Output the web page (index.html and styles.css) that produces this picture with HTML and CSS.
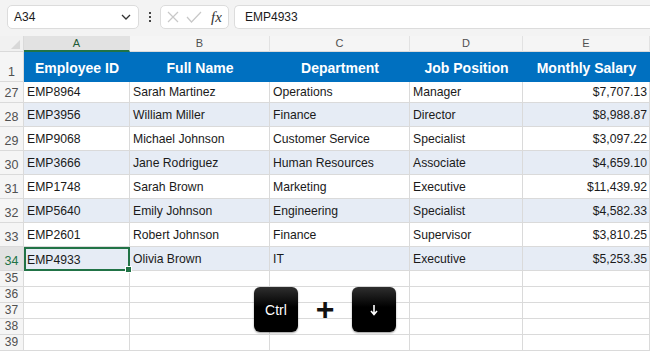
FILE: index.html
```html
<!DOCTYPE html>
<html lang="en">
<head>
  <meta charset="UTF-8">
  <title>Employees - Ctrl + Down</title>
  <link rel="stylesheet" href="styles.css">
</head>
<body>

  <div class="toolbar">
    <div class="namebox">
      <span>A34</span>
      <svg class="chev" width="10" height="6" viewBox="0 0 10 6"><path d="M1 1l4 4 4-4" fill="none" stroke="#333" stroke-width="1.3"/></svg>
    </div>
    <div class="dots"><i></i><i></i><i></i></div>
    <div class="fxbox">
      <svg width="14" height="14" viewBox="0 0 14 14"><path d="M2 2l10 10M12 2L2 12" stroke="#c8c8c8" stroke-width="1.2"/></svg>
      <svg width="16" height="14" viewBox="0 0 16 14"><path d="M1 7l4.5 5L15 2" fill="none" stroke="#c8c8c8" stroke-width="1.2"/></svg>
      <span class="fx">fx</span>
    </div>
    <div class="formula">EMP4933</div>
  </div>

  <div class="sheet">
    <div class="corner"></div>
    <div class="colhead sel">A</div>
    <div class="colhead">B</div>
    <div class="colhead">C</div>
    <div class="colhead">D</div>
    <div class="colhead">E</div>

    <div class="rowhead r-title">1</div>
    <div class="title">Employee ID</div>
    <div class="title">Full Name</div>
    <div class="title">Department</div>
    <div class="title">Job Position</div>
    <div class="title">Monthly Salary</div>
  </div>

  <div class="sheet" id="rows"></div>

  <div class="keys">
    <div class="key">Ctrl</div>
    <span class="plus">+</span>
    <div class="key">
      <svg width="10" height="12" viewBox="0 0 10 12"><path d="M5 1v9M2 7l3 3.5L8 7" fill="none" stroke="#fff" stroke-width="1.6"/></svg>
    </div>
  </div>

  <script>
    const dados = [
      [27, 'EMP8964', 'Sarah Martinez', 'Operations', 'Manager', '$7,707.13'],
      [28, 'EMP3956', 'William Miller', 'Finance', 'Director', '$8,988.87'],
      [29, 'EMP9068', 'Michael Johnson', 'Customer Service', 'Specialist', '$3,097.22'],
      [30, 'EMP3666', 'Jane Rodriguez', 'Human Resources', 'Associate', '$4,659.10'],
      [31, 'EMP1748', 'Sarah Brown', 'Marketing', 'Executive', '$11,439.92'],
      [32, 'EMP5640', 'Emily Johnson', 'Engineering', 'Specialist', '$4,582.33'],
      [33, 'EMP2601', 'Robert Johnson', 'Finance', 'Supervisor', '$3,810.25'],
      [34, 'EMP4933', 'Olivia Brown', 'IT', 'Executive', '$5,253.35']
    ];

    const rows = document.getElementById('rows');
    let html = '';

    dados.forEach(linha => {
      const n = linha[0];
      const faixa = n % 2 === 0 ? ' band' : '';
      const curto = n === 27 ? ' short' : '';
      const ativo = n === 34 ? ' active' : '';
      html += `<div class="rowhead${curto}${ativo}">${n}</div>`;
      for (let i = 1; i <= 5; i++) {
        let cls = 'cell' + faixa + curto;
        if (i === 5) cls += ' num';
        if (n === 34 && i === 1) cls += ' selected';
        html += `<div class="${cls}">${linha[i]}</div>`;
      }
    });

    for (let n = 35; n <= 39; n++) {
      html += `<div class="rowhead small">${n}</div>`;
      for (let i = 1; i <= 5; i++) html += '<div class="cell small"></div>';
    }

    rows.innerHTML = html;
  </script>

</body>
</html>
```

FILE: styles.css
```css
body {
  margin: 0;
  width: 650px;
  height: 352px;
  overflow: hidden;
  background: #fff;
  font-family: "Liberation Sans", Arial, sans-serif;
  color: #1a1a1a;
  position: relative;
}

.toolbar {
  height: 36px;
  background: #f3f3f3;
  display: flex;
  align-items: flex-start;
  padding: 5px 0 0 7px;
  box-sizing: border-box;
}

.namebox {
  width: 132px;
  height: 24px;
  box-sizing: border-box;
  background: #fff;
  border: 1px solid #dcdcdc;
  border-radius: 5px;
  display: flex;
  align-items: center;
  justify-content: space-between;
  padding: 0 7px 0 6px;
  font-size: 12px;
}

.dots {
  width: 21px;
  display: flex;
  flex-direction: column;
  align-items: center;
  justify-content: center;
  gap: 2px;
  height: 24px;
}

.dots i {
  width: 2px;
  height: 2px;
  background: #444;
  display: block;
}

.fxbox {
  width: 69px;
  height: 24px;
  box-sizing: border-box;
  background: #fff;
  border: 1px solid #dcdcdc;
  border-radius: 5px;
  display: flex;
  align-items: center;
  gap: 6px;
  padding: 0 0 0 5px;
}

.fx {
  font-family: "Liberation Serif", serif;
  font-style: italic;
  font-size: 15px;
  color: #333;
  margin-left: 3px;
}

.formula {
  margin-left: 5px;
  flex: 1;
  height: 24px;
  box-sizing: border-box;
  background: #fff;
  border: 1px solid #dcdcdc;
  border-right: none;
  border-radius: 5px 0 0 5px;
  font-size: 12px;
  line-height: 22px;
  padding-left: 10px;
}

.sheet {
  display: grid;
  grid-template-columns: 24px 106px 140px 140px 113px 127px;
}

.corner,
.colhead,
.rowhead {
  background: #f5f5f5;
  box-sizing: border-box;
  border-right: 1px solid #dadada;
  border-bottom: 1px solid #dadada;
  color: #505050;
  font-size: 11px;
}

.corner {
  height: 16px;
  position: relative;
  background: #f1f1f1;
}

.corner::after {
  content: '';
  position: absolute;
  right: 3px;
  bottom: 2px;
  border-left: 9px solid transparent;
  border-bottom: 9px solid #d8d8d8;
}

.colhead {
  height: 16px;
  text-align: center;
  line-height: 15px;
  border-right-color: #e2e2e2;
}

.colhead.sel {
  background: #e2e2e2;
  border-bottom: 2px solid #217346;
  color: #1f5c36;
}

.rowhead {
  height: 24px;
  display: flex;
  align-items: flex-end;
  justify-content: center;
  padding-bottom: 2px;
  font-size: 12.5px;
}

.rowhead.r-title {
  height: 30px;
}

.rowhead.short {
  height: 21px;
}

.rowhead.active {
  background: #e2e2e2;
  color: #217346;
}

.rowhead.small,
.cell.small {
  height: 16px;
  padding-bottom: 0;
  font-size: 12px;
  line-height: 15px;
}

.title {
  height: 30px;
  background: #0070c0;
  color: #fff;
  font-weight: bold;
  font-size: 14px;
  display: flex;
  align-items: center;
  justify-content: center;
  padding-top: 1px;
  box-sizing: border-box;
}

.cell {
  height: 24px;
  box-sizing: border-box;
  border-right: 1px solid #dadada;
  border-bottom: 1px solid #dadada;
  font-size: 12.2px;
  padding: 1px 3px 0;
  display: flex;
  align-items: center;
  white-space: nowrap;
  overflow: hidden;
}

.cell.short {
  height: 21px;
  padding-top: 0;
  padding-bottom: 1px;
}

.cell.band {
  background: #e6ecf5;
}

.cell.num {
  justify-content: flex-end;
  padding-right: 2px;
}

.cell.small {
  display: block;
}

.cell.selected {
  border: 2px solid #217346;
  padding-left: 1px;
  position: relative;
  overflow: visible;
}

.cell.selected::after {
  content: '';
  position: absolute;
  right: -4px;
  bottom: -4px;
  width: 5px;
  height: 5px;
  background: #217346;
  border: 1px solid #fff;
}

.keys {
  position: absolute;
  left: 254px;
  top: 287px;
  display: flex;
  align-items: center;
}

.key {
  width: 44px;
  height: 45px;
  border-radius: 6px;
  background: linear-gradient(#2e2e2e, #000 45%);
  box-shadow: 0 1px 2px rgba(0, 0, 0, 0.4);
  color: #fff;
  font-size: 14px;
  display: flex;
  align-items: center;
  justify-content: center;
}

.plus {
  width: 54px;
  text-align: center;
  font-size: 32px;
  font-weight: bold;
  color: #111;
  line-height: 30px;
  margin-top: -2px;
}
```
